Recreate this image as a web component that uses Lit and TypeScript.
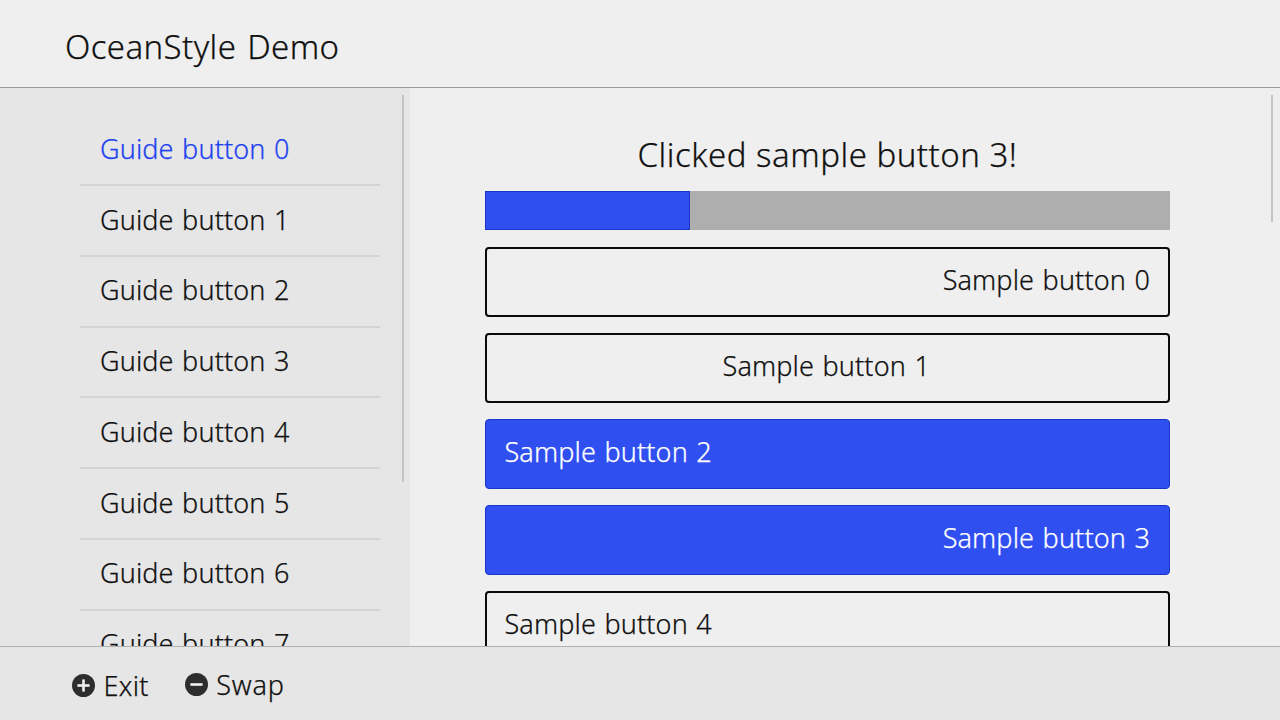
import { LitElement, html, css, svg } from "lit";
import { customElement, state } from "lit/decorators.js";
import { classMap } from "lit/directives/class-map.js";

type Align = "left" | "center" | "right";
interface Sample { label: string; align: Align; on: boolean; }

@customElement("app-root")
export class AppRoot extends LitElement {
  @state() private selected = 0;
  @state() private progress = 205 / 685;
  @state() private samples: Sample[] = [
    { label: "Sample button 0", align: "right", on: false },
    { label: "Sample button 1", align: "center", on: false },
    { label: "Sample button 2", align: "left", on: true },
    { label: "Sample button 3", align: "right", on: true },
    { label: "Sample button 4", align: "left", on: false },
  ];

  static styles = css`
    :host {
      display: flex;
      flex-direction: column;
      width: 1280px;
      height: 720px;
      overflow: hidden;
      background: #efefef;
      color: #111;
      font-family: "Noto Sans", "Open Sans", sans-serif;
      font-weight: 300;
      font-size: 27px;
      line-height: 40px;
      letter-spacing: 0.13px;
      word-spacing: 1.3px;
      -webkit-text-stroke: 0.25px currentColor;
    }
    * { box-sizing: border-box; }
    .header {
      flex: none;
      height: 88px;
      padding: 22px 65px 0;
      border-bottom: 1px solid #999;
      font-size: 33px;
      line-height: 50px;
      letter-spacing: 0.4px;
      word-spacing: 2px;
      white-space: nowrap;
    }
    .body { flex: none; height: 558px; display: flex; overflow: hidden; }
    .side {
      width: 410px;
      display: flex;
      justify-content: space-between;
      background: #e6e6e6;
      padding: 27.25px 6.5px 0 80px;
    }
    .list { width: 300px; }
    .item {
      height: 70.75px;
      padding: 13.5px 20px 0;
      border-bottom: 2px solid #d2d5d5;
      white-space: nowrap;
    }
    .item.selected { color: #1f43f0; }
    .bar { width: 2px; background: #c4c4c4; }
    .bar.side-bar { height: 387px; margin-top: -20.25px; }
    .bar.main-bar { height: 127px; margin-top: 7px; }
    .main { flex: 1; display: flex; justify-content: space-between; padding: 0 7px 0 75px; }
    .column { width: 685px; }
    .status {
      height: 103px;
      padding-top: 42px;
      text-align: center;
      font-size: 33px;
      line-height: 50px;
      letter-spacing: 0.5px;
      word-spacing: 0;
    }
    .progress { height: 39.4px; background: #aeaeae; margin-bottom: 16.6px; }
    .fill { height: 100%; background: #304ff0; border: 1px solid #1b35c8; }
    .button {
      height: 70px;
      margin-bottom: 16px;
      padding: 11px 18px 0 17.5px;
      border: 2px solid #0a0a0a;
      border-radius: 4px;
      white-space: nowrap;
    }
    .button.center { text-align: center; padding: 11px 20px 0 17.5px; }
    .button.right { text-align: right; }
    .button.on { background: #304ff0; border: 1px solid #1b35c8; padding: 12px 19px 0 18.5px; color: #fff; }
    .footer {
      flex: 1;
      display: flex;
      align-items: flex-start;
      gap: 36px;
      border-top: 1px solid #b0b0b0;
      background: #e6e6e6;
      padding: 19px 72px 0;
      letter-spacing: 0.3px;
    }
    .hint { display: flex; gap: 8.5px; }
    .hint svg { display: block; margin-top: 8px; }
    .hint.raised svg { margin-top: 7px; }
    .hint.raised .label { margin-top: -1px; letter-spacing: 0.8px; }
  `;

  private choose(index: number) { this.selected = index; }

  private toggle(index: number) {
    this.samples = this.samples.map((s, i) => (i === index ? { ...s, on: !s.on } : s));
  }

  private hint(label: string, plus: boolean) {
    return html`<div class=${classMap({ hint: true, raised: !plus })}>
      <svg width="23" height="23" viewBox="0 0 23 23">
        <circle cx="11.5" cy="11.5" r="11.5" fill="#2d2d2d"></circle>
        <path d="M5.4 11.5H17.6" stroke="#f0f0f0" stroke-width="2.6"></path>
        ${plus ? svg`<path d="M11.5 5.4V17.6" stroke="#f0f0f0" stroke-width="2.6"></path>` : null}
      </svg>
      <span class="label">${label}</span>
    </div>`;
  }

  render() {
    return html`
      <div class="header"><span class="title">OceanStyle Demo</span></div>
      <div class="body">
        <div class="side">
          <div class="list">
            ${Array.from({ length: 8 }, (_, i) => html`
              <div class=${classMap({ item: true, selected: i === this.selected })} @click=${() => this.choose(i)}>
                <span>Guide button ${i}</span>
              </div>`)}
          </div>
          <div class="bar side-bar"></div>
        </div>
        <div class="main">
          <div class="column">
            <div class="status"><span>Clicked sample button 3!</span></div>
            <div class="progress"><div class="fill" style="width:${this.progress * 100}%"></div></div>
            ${this.samples.map((s, i) => html`
              <div class=${classMap({ button: true, [s.align]: true, on: s.on })} @click=${() => this.toggle(i)}>
                <span>${s.label}</span>
              </div>`)}
          </div>
          <div class="bar main-bar"></div>
        </div>
      </div>
      <div class="footer">${this.hint("Exit", true)}${this.hint("Swap", false)}</div>
    `;
  }
}
